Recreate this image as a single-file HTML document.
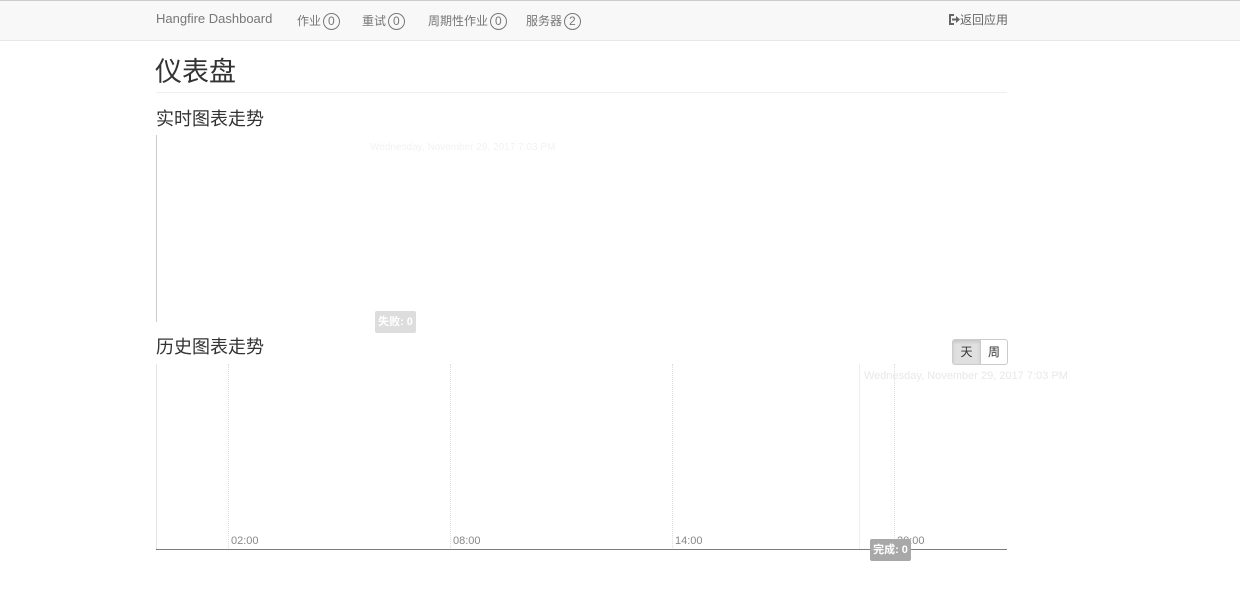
<!DOCTYPE html>
<html><head><meta charset="utf-8"><style>
body{margin:0;width:1240px;height:606px;background:#fff;font-family:"Liberation Sans","Noto Sans CJK SC",sans-serif;color:#333;position:relative;overflow:hidden}
.nav{position:absolute;left:0;top:0;width:1240px;height:39px;background:#f8f8f8;border-top:1px solid #ccc;border-bottom:1px solid #e7e7e7}
.nav span{position:absolute;top:11px;font-size:12px;color:#777}
.b{display:inline-block;border:1px solid #777;border-radius:9px;padding:0 4px;font-size:12px;line-height:15px;margin-left:2px}
.a{position:absolute}
.v{position:absolute;top:364px;height:186px;border-left:1px dotted #ddd}
</style></head><body>
<div class="nav">
<span style="left:156px;font-size:13px;top:10px">Hangfire Dashboard</span>
<span style="left:297px">作业<span class="b" style="position:static">0</span></span>
<span style="left:362px">重试<span class="b" style="position:static">0</span></span>
<span style="left:428px">周期性作业<span class="b" style="position:static">0</span></span>
<span style="left:526px">服务器<span class="b" style="position:static">2</span></span>
<span style="left:948px;color:#666;top:10px"><svg width="12" height="11" viewBox="0 0 12 11" style="vertical-align:-1px"><path d="M6 1H2v9h4" fill="none" stroke="#666" stroke-width="2"/><path d="M4 4.5h4V2l4 3.5-4 3.5V6.5H4z" fill="#666"/></svg>返回应用</span>
</div>
<div class="a" style="left:155px;top:50px;font-size:27px">仪表盘</div>
<div class="a" style="left:156px;top:92px;width:851px;border-top:1px solid #eee"></div>
<div class="a" style="left:156px;top:105px;font-size:18px">实时图表走势</div>
<div class="a" style="left:156px;top:135px;width:1px;height:187px;background:#ccc"></div>
<div class="a" style="left:370px;top:142px;font-size:10px;color:#f2f2f2">Wednesday, November 29, 2017 7:03 PM</div>
<div class="a" style="left:375px;top:311px;width:41px;height:22px;background:#ddd;color:#fff;font-size:11px;font-weight:bold;line-height:22px;text-align:center;border-radius:2px">失败: 0</div>
<div class="a" style="left:156px;top:333px;font-size:18px">历史图表走势</div>
<div class="a" style="left:952px;top:339px;width:54px;height:24px;border:1px solid #ccc;border-radius:3px;font-size:12px;line-height:24px;overflow:hidden">
<div style="position:absolute;left:0;top:0;width:27px;height:24px;background:#e0e0e0;text-align:center;box-shadow:inset 0 2px 3px rgba(0,0,0,.12);border-right:1px solid #ccc">天</div>
<div style="position:absolute;left:28px;top:0;width:26px;text-align:center">周</div></div>
<div class="a" style="left:156px;top:364px;width:1px;height:186px;background:#e4e4e4"></div>
<div class="v" style="left:228px"></div>
<div class="v" style="left:450px"></div>
<div class="v" style="left:672px"></div>
<div class="v" style="left:894px"></div>
<div class="a" style="left:859px;top:364px;width:1px;height:186px;background:#eee"></div>
<div class="a" style="left:231px;top:535px;font-size:11px;color:#888">02:00</div>
<div class="a" style="left:453px;top:535px;font-size:11px;color:#888">08:00</div>
<div class="a" style="left:675px;top:535px;font-size:11px;color:#888">14:00</div>
<div class="a" style="left:897px;top:535px;font-size:11px;color:#888">20:00</div>
<div class="a" style="left:864px;top:370px;font-size:11px;color:#e8e8e8;white-space:nowrap">Wednesday, November 29, 2017 7:03 PM</div>
<div class="a" style="left:156px;top:549px;width:851px;height:1px;background:#b06a50"></div>
<div class="a" style="left:870px;top:539px;width:41px;height:22px;background:#a8a8a8;color:#fff;font-size:11px;font-weight:bold;line-height:22px;text-align:center;border-radius:2px">完成: 0</div>
</body></html>
